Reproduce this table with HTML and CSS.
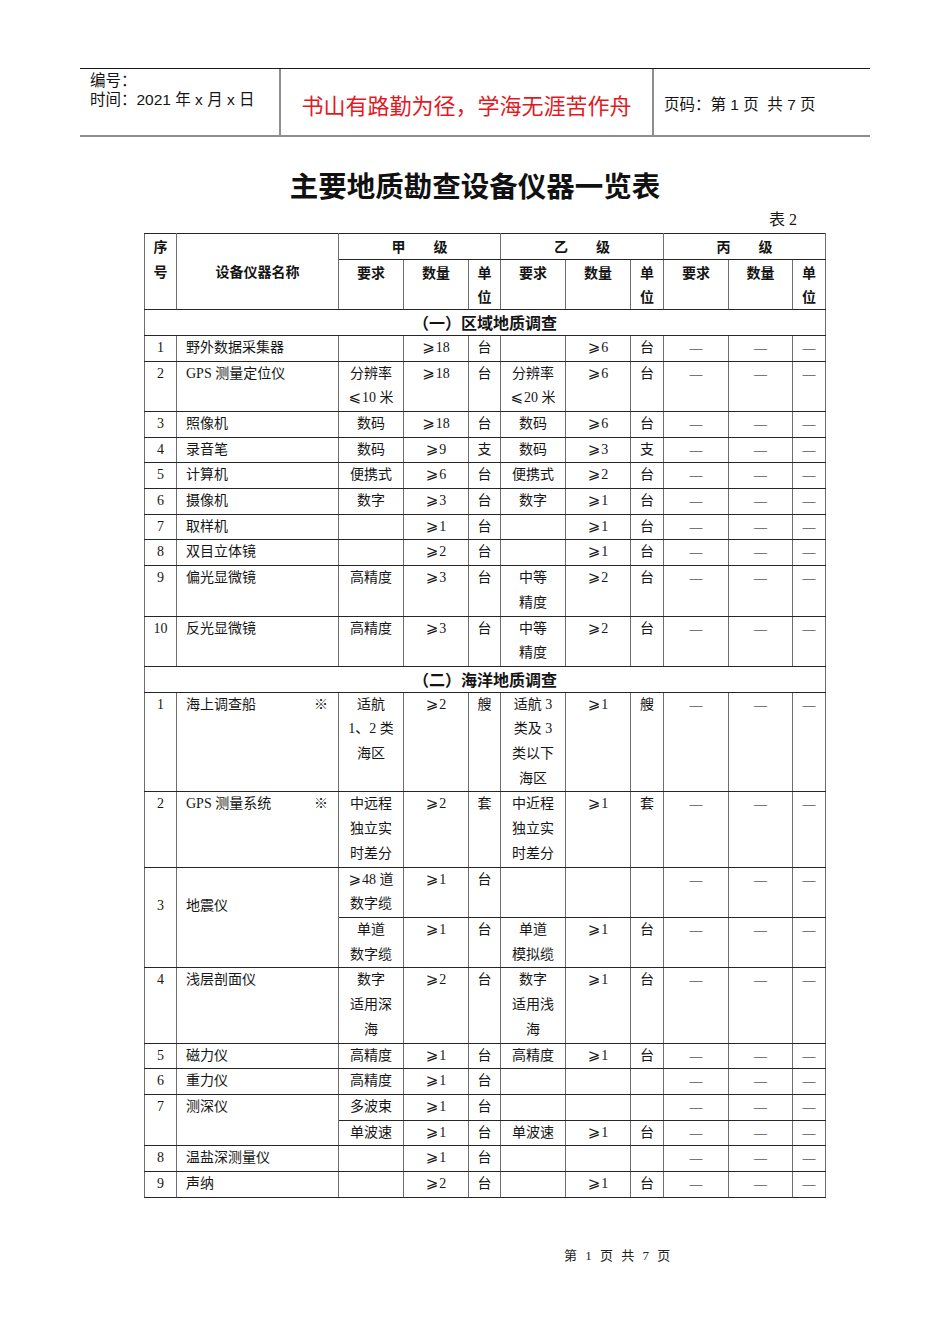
FILE: index.html
```html
<!DOCTYPE html>
<html lang="zh-CN">
<head>
<meta charset="utf-8">
<title>主要地质勘查设备仪器一览表</title>
<link rel="stylesheet" href="styles.css">
</head>
<body>
<div class="page">
  <header class="doc-head">
    <div class="hc hc-left">
      <div>编号：</div>
      <div>时间：2021 年 x 月 x 日</div>
    </div>
    <div class="hc hc-mid">书山有路勤为径，学海无涯苦作舟</div>
    <div class="hc hc-right">页码：第 1 页&nbsp; 共 7 页</div>
  </header>

  <h1 class="title">主要地质勘查设备仪器一览表</h1>

  <div class="sheet">
    <div class="tabno">表 2</div>
    <table class="eq">
      <colgroup>
        <col class="c-seq"><col class="c-name">
        <col class="c-req"><col class="c-qty"><col class="c-unit">
        <col class="c-req"><col class="c-qty"><col class="c-unit2">
        <col class="c-req"><col class="c-qty2"><col class="c-unit2">
      </colgroup>
      <thead>
        <tr>
          <th rowspan="2" class="top">序<br>号</th>
          <th rowspan="2" class="mid">设备仪器名称</th>
          <th colspan="3">甲　　级</th>
          <th colspan="3">乙　　级</th>
          <th colspan="3">丙　　级</th>
        </tr>
        <tr>
          <th>要求</th><th>数量</th><th>单<br>位</th>
          <th>要求</th><th>数量</th><th>单<br>位</th>
          <th>要求</th><th>数量</th><th>单<br>位</th>
        </tr>
      </thead>
      <tbody>
        <tr><th colspan="11" class="sec">（一）区域地质调查</th></tr>
        <tr><td>1</td><td class="nm">野外数据采集器</td><td></td><td><span class="ge">⩾</span>18</td><td>台</td><td></td><td><span class="ge">⩾</span>6</td><td>台</td><td class="ds">—</td><td class="ds">—</td><td class="ds">—</td></tr>
        <tr><td>2</td><td class="nm">GPS 测量定位仪</td><td>分辨率<br><span class="ge">⩽</span>10 米</td><td><span class="ge">⩾</span>18</td><td>台</td><td>分辨率<br><span class="ge">⩽</span>20 米</td><td><span class="ge">⩾</span>6</td><td>台</td><td class="ds">—</td><td class="ds">—</td><td class="ds">—</td></tr>
        <tr><td>3</td><td class="nm">照像机</td><td>数码</td><td><span class="ge">⩾</span>18</td><td>台</td><td>数码</td><td><span class="ge">⩾</span>6</td><td>台</td><td class="ds">—</td><td class="ds">—</td><td class="ds">—</td></tr>
        <tr><td>4</td><td class="nm">录音笔</td><td>数码</td><td><span class="ge">⩾</span>9</td><td>支</td><td>数码</td><td><span class="ge">⩾</span>3</td><td>支</td><td class="ds">—</td><td class="ds">—</td><td class="ds">—</td></tr>
        <tr><td>5</td><td class="nm">计算机</td><td>便携式</td><td><span class="ge">⩾</span>6</td><td>台</td><td>便携式</td><td><span class="ge">⩾</span>2</td><td>台</td><td class="ds">—</td><td class="ds">—</td><td class="ds">—</td></tr>
        <tr><td>6</td><td class="nm">摄像机</td><td>数字</td><td><span class="ge">⩾</span>3</td><td>台</td><td>数字</td><td><span class="ge">⩾</span>1</td><td>台</td><td class="ds">—</td><td class="ds">—</td><td class="ds">—</td></tr>
        <tr><td>7</td><td class="nm">取样机</td><td></td><td><span class="ge">⩾</span>1</td><td>台</td><td></td><td><span class="ge">⩾</span>1</td><td>台</td><td class="ds">—</td><td class="ds">—</td><td class="ds">—</td></tr>
        <tr><td>8</td><td class="nm">双目立体镜</td><td></td><td><span class="ge">⩾</span>2</td><td>台</td><td></td><td><span class="ge">⩾</span>1</td><td>台</td><td class="ds">—</td><td class="ds">—</td><td class="ds">—</td></tr>
        <tr><td>9</td><td class="nm">偏光显微镜</td><td>高精度</td><td><span class="ge">⩾</span>3</td><td>台</td><td>中等<br>精度</td><td><span class="ge">⩾</span>2</td><td>台</td><td class="ds">—</td><td class="ds">—</td><td class="ds">—</td></tr>
        <tr><td>10</td><td class="nm">反光显微镜</td><td>高精度</td><td><span class="ge">⩾</span>3</td><td>台</td><td>中等<br>精度</td><td><span class="ge">⩾</span>2</td><td>台</td><td class="ds">—</td><td class="ds">—</td><td class="ds">—</td></tr>

        <tr><th colspan="11" class="sec">（二）海洋地质调查</th></tr>
        <tr><td>1</td><td class="nm"><div class="nmflex"><span>海上调查船</span><span>※</span></div></td><td>适航<br>1、2 类<br>海区</td><td><span class="ge">⩾</span>2</td><td>艘</td><td>适航 3<br>类及 3<br>类以下<br>海区</td><td><span class="ge">⩾</span>1</td><td>艘</td><td class="ds">—</td><td class="ds">—</td><td class="ds">—</td></tr>
        <tr><td>2</td><td class="nm"><div class="nmflex"><span>GPS 测量系统</span><span>※</span></div></td><td>中远程<br>独立实<br>时差分</td><td><span class="ge">⩾</span>2</td><td>套</td><td>中近程<br>独立实<br>时差分</td><td><span class="ge">⩾</span>1</td><td>套</td><td class="ds">—</td><td class="ds">—</td><td class="ds">—</td></tr>
        <tr><td rowspan="2" class="drop">3</td><td rowspan="2" class="nm drop">地震仪</td><td><span class="ge">⩾</span>48 道<br>数字缆</td><td><span class="ge">⩾</span>1</td><td>台</td><td></td><td></td><td></td><td class="ds">—</td><td class="ds">—</td><td class="ds">—</td></tr>
        <tr><td>单道<br>数字缆</td><td><span class="ge">⩾</span>1</td><td>台</td><td>单道<br>模拟缆</td><td><span class="ge">⩾</span>1</td><td>台</td><td class="ds">—</td><td class="ds">—</td><td class="ds">—</td></tr>
        <tr><td>4</td><td class="nm">浅层剖面仪</td><td>数字<br>适用深<br>海</td><td><span class="ge">⩾</span>2</td><td>台</td><td>数字<br>适用浅<br>海</td><td><span class="ge">⩾</span>1</td><td>台</td><td class="ds">—</td><td class="ds">—</td><td class="ds">—</td></tr>
        <tr><td>5</td><td class="nm">磁力仪</td><td>高精度</td><td><span class="ge">⩾</span>1</td><td>台</td><td>高精度</td><td><span class="ge">⩾</span>1</td><td>台</td><td class="ds">—</td><td class="ds">—</td><td class="ds">—</td></tr>
        <tr><td>6</td><td class="nm">重力仪</td><td>高精度</td><td><span class="ge">⩾</span>1</td><td>台</td><td></td><td></td><td></td><td class="ds">—</td><td class="ds">—</td><td class="ds">—</td></tr>
        <tr><td rowspan="2">7</td><td rowspan="2" class="nm">测深仪</td><td>多波束</td><td><span class="ge">⩾</span>1</td><td>台</td><td></td><td></td><td></td><td class="ds">—</td><td class="ds">—</td><td class="ds">—</td></tr>
        <tr><td>单波速</td><td><span class="ge">⩾</span>1</td><td>台</td><td>单波速</td><td><span class="ge">⩾</span>1</td><td>台</td><td class="ds">—</td><td class="ds">—</td><td class="ds">—</td></tr>
        <tr><td>8</td><td class="nm">温盐深测量仪</td><td></td><td><span class="ge">⩾</span>1</td><td>台</td><td></td><td></td><td></td><td class="ds">—</td><td class="ds">—</td><td class="ds">—</td></tr>
        <tr><td>9</td><td class="nm">声纳</td><td></td><td><span class="ge">⩾</span>2</td><td>台</td><td></td><td><span class="ge">⩾</span>1</td><td>台</td><td class="ds">—</td><td class="ds">—</td><td class="ds">—</td></tr>
      </tbody>
    </table>
  </div>

  <div class="foot">第 1 页 共 7 页</div>
</div>
</body>
</html>
```

FILE: styles.css
```css
* { box-sizing: border-box; }

html, body {
  margin: 0;
  padding: 0;
  background: #ffffff;
}

body {
  font-family: "Liberation Serif", "Noto Sans CJK SC", serif;
  color: #161616;
}

.page {
  width: 950px;
  min-height: 1344px;
  padding-top: 68px;
}

/* ---------- document header ---------- */
.doc-head {
  display: flex;
  margin-left: 80px;
  width: 790px;
  height: 69px;
  border-top: 1px solid #1a1a1a;
  border-bottom: 2px solid #8e8e8e;
  font-family: "Liberation Sans", "Noto Sans CJK SC", sans-serif;
  font-size: 15.5px;
  color: #141414;
}

.hc-left {
  width: 201px;
  padding: 2px 0 0 10px;
  line-height: 19px;
  border-right: 2px solid #8e8e8e;
}

.hc-mid {
  width: 373px;
  display: flex;
  align-items: center;
  justify-content: center;
  padding-top: 4px;
  font-family: "Noto Sans CJK SC", sans-serif;
  font-size: 22px;
  color: #e3191f;
  border-right: 2px solid #8e8e8e;
}

.hc-right {
  flex: 1;
  display: flex;
  align-items: center;
  padding: 2px 0 0 10px;
}

/* ---------- title ---------- */
.title {
  margin: 28px 0 0 0;
  text-align: center;
  font-family: "Noto Sans CJK SC", sans-serif;
  font-size: 28.5px;
  font-weight: 700;
  line-height: 40px;
  color: #111;
}

.sheet {
  margin-left: 144px;
  width: 680px;
}

.tabno {
  margin-top: 5px;
  margin-bottom: 3px;
  padding-right: 27px;
  text-align: right;
  font-size: 16px;
  line-height: 20px;
}

/* ---------- table ---------- */
.eq {
  width: 680px;
  table-layout: fixed;
  border-collapse: collapse;
  font-size: 14px;
}

.c-seq { width: 32px; }
.c-name { width: 162px; }
.c-req { width: 65px; }
.c-qty { width: 65px; }
.c-qty2 { width: 64px; }
.c-unit { width: 32px; }
.c-unit2 { width: 33px; }

.eq td,
.eq th {
  padding: 0;
  line-height: 24.7px;
  text-align: center;
  vertical-align: top;
  border-top: 1px solid #262626;
  border-bottom: 1px solid #262626;
  border-left: 1px solid #6e6e6e;
  border-right: 1px solid #6e6e6e;
  overflow: hidden;
  white-space: nowrap;
}

.eq th {
  font-family: "Noto Sans CJK SC", sans-serif;
  font-weight: 700;
  font-size: 14px;
  color: #141414;
}

.eq th.mid { vertical-align: middle; }

.eq th.sec {
  font-size: 16px;
}

.eq td.nm {
  text-align: left;
  padding-left: 9px;
}

.nmflex {
  display: flex;
  justify-content: space-between;
  padding-right: 10px;
}

.eq td.drop {
  padding-top: 26px;
}

.eq td.ds {
  color: #000;
  font-size: 13px;
}

.ge {
  font-family: "DejaVu Serif", "DejaVu Sans", "Noto Sans CJK SC", serif;
  font-size: 15px;
  line-height: 0;
  margin-right: 1px;
}

/* ---------- footer ---------- */
.foot {
  margin-top: 48px;
  margin-left: 564px;
  font-size: 13px;
  line-height: 20px;
  word-spacing: 5px;
  color: #222;
}
```
